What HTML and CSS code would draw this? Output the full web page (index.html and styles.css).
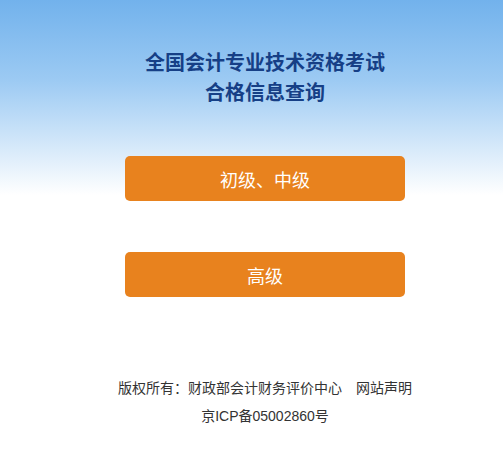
FILE: index.html
```html
<!DOCTYPE html>
<html lang="zh-CN">
<head>
<meta charset="utf-8">
<title>合格信息查询</title>
<link rel="stylesheet" href="styles.css">
</head>
<body>
<div class="page">
  <h1 class="title">全国会计专业技术资格考试<br>合格信息查询</h1>
  <div class="buttons">
    <a class="btn" href="#">初级、中级</a>
    <a class="btn" href="#">高级</a>
  </div>
  <div class="footer">
    <p>版权所有：财政部会计财务评价中心　网站声明</p>
    <p>京ICP备05002860号</p>
  </div>
</div>
</body>
</html>
```
FILE: styles.css
```css
html, body {
  margin: 0;
  padding: 0;
}
body {
  width: 503px;
  height: 457px;
  background: linear-gradient(to bottom, #72b2ec 0px, #9ccaf3 80px, #d8eafa 150px, #ffffff 195px, #ffffff 100%);
  font-family: "Noto Sans CJK SC", "Noto Sans", sans-serif;
}
.page {
  padding-left: 27px;
  padding-top: 47px;
  display: flex;
  flex-direction: column;
  align-items: center;
}
.title {
  margin: 0;
  font-size: 20px;
  line-height: 30px;
  font-weight: 700;
  color: #163f86;
  text-align: center;
}
.buttons {
  margin-top: 49px;
  display: flex;
  flex-direction: column;
  gap: 51px;
}
.btn {
  display: flex;
  align-items: center;
  justify-content: center;
  width: 280px;
  height: 45px;
  border-radius: 5px;
  background: #e8821e;
  color: #ffffff;
  font-size: 18px;
  text-decoration: none;
}
.footer {
  margin-top: 77px;
  text-align: center;
  color: #333333;
  font-family: "Liberation Sans", "Noto Sans CJK SC", sans-serif;
  font-size: 14px;
  line-height: 28px;
}
.footer p {
  margin: 0;
}
```
